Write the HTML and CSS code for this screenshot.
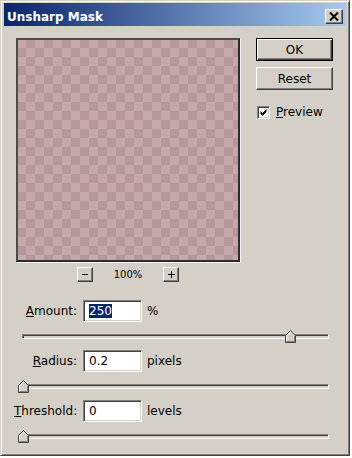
FILE: index.html
```html
<!DOCTYPE html>
<html>
<head>
<meta charset="utf-8">
<title>Unsharp Mask</title>
<link rel="stylesheet" href="styles.css">
</head>
<body>
<div class="window">
  <div class="titlebar">
    <span class="title">Unsharp Mask</span>
    <span class="close">
      <svg width="10" height="9" viewBox="0 0 10 9"><path d="M1 0.5 L9 8.5 M9 0.5 L1 8.5" stroke="#000" stroke-width="2" fill="none"/></svg>
    </span>
  </div>
  <div class="body">
    <div class="top">
      <div class="preview-col">
        <div class="preview"></div>
        <div class="zoom-row">
          <span class="small-btn"><svg width="6" height="2" viewBox="0 0 6 2"><rect x="0" y="0" width="6" height="1" fill="#000"/></svg></span>
          <span class="zoom-label">100%</span>
          <span class="small-btn"><svg width="7" height="7" viewBox="0 0 7 7"><rect x="0" y="3" width="7" height="1" fill="#000"/><rect x="3" y="0" width="1" height="7" fill="#000"/></svg></span>
        </div>
      </div>
      <div class="side">
        <div class="btn btn-default">OK</div>
        <div class="btn">Reset</div>
        <div class="check-row">
          <span class="checkbox"><svg width="7" height="7" viewBox="0 0 7 7"><path d="M0.5 2.5 L2.5 4.5 L6.5 0.5 M0.5 3.5 L2.5 5.5 L6.5 1.5 M0.5 4.5 L2.5 6.5 L6.5 2.5" stroke="#000" stroke-width="1" fill="none"/></svg></span>
          <span class="check-label"><u>P</u>review</span>
        </div>
      </div>
    </div>
    <div class="controls">
      <div class="field">
        <span class="label"><u>A</u>mount:</span>
        <span class="input"><span class="sel">250</span></span>
        <span class="unit">%</span>
      </div>
      <div class="slider">
        <svg class="thumb" style="left:262px" width="11" height="13" viewBox="0 0 11 13"><polygon points="0.5,12.5 0.5,5.5 5.5,0.5 10.5,5.5 10.5,12.5" fill="#d4d0c8" stroke="#404040"/><polyline points="1.5,11.5 1.5,6 5.5,2" fill="none" stroke="#fff"/><polyline points="9.5,6 9.5,11.5 1.5,11.5" fill="none" stroke="#808080"/></svg>
      </div>
      <div class="field">
        <span class="label"><u>R</u>adius:</span>
        <span class="input">0.2</span>
        <span class="unit">pixels</span>
      </div>
      <div class="slider">
        <svg class="thumb" style="left:-5px" width="11" height="13" viewBox="0 0 11 13"><polygon points="0.5,12.5 0.5,5.5 5.5,0.5 10.5,5.5 10.5,12.5" fill="#d4d0c8" stroke="#404040"/><polyline points="1.5,11.5 1.5,6 5.5,2" fill="none" stroke="#fff"/><polyline points="9.5,6 9.5,11.5 1.5,11.5" fill="none" stroke="#808080"/></svg>
      </div>
      <div class="field">
        <span class="label"><u>T</u>hreshold:</span>
        <span class="input">0</span>
        <span class="unit">levels</span>
      </div>
      <div class="slider">
        <svg class="thumb" style="left:-5px" width="11" height="13" viewBox="0 0 11 13"><polygon points="0.5,12.5 0.5,5.5 5.5,0.5 10.5,5.5 10.5,12.5" fill="#d4d0c8" stroke="#404040"/><polyline points="1.5,11.5 1.5,6 5.5,2" fill="none" stroke="#fff"/><polyline points="9.5,6 9.5,11.5 1.5,11.5" fill="none" stroke="#808080"/></svg>
      </div>
    </div>
  </div>
</div>
</body>
</html>
```
FILE: styles.css
```css
html, body {
  margin: 0;
  background: #ffffff;
}
body {
  font-family: "DejaVu Sans", Tahoma, sans-serif;
  font-size: 12px;
  color: #000;
}
.window {
  box-sizing: border-box;
  width: 350px;
  height: 456px;
  background: #d4d0c8;
  border: 1px solid;
  border-color: #d4d0c8 #404040 #404040 #d4d0c8;
  box-shadow: inset 1px 1px #ffffff, inset -1px -1px #808080;
  padding: 2px 3px 0 3px;
}
.titlebar {
  box-sizing: border-box;
  height: 23px;
  display: flex;
  align-items: center;
  justify-content: space-between;
  padding: 4px 3px 0 3px;
  background: linear-gradient(to right, #0a246a, #a6caf0);
  color: #fff;
  font-weight: bold;
  font-size: 12px;
}
.close {
  box-sizing: border-box;
  width: 18px;
  height: 15px;
  background: #d4d0c8;
  border: 1px solid;
  border-color: #ffffff #404040 #404040 #ffffff;
  box-shadow: inset -1px -1px #808080;
  display: flex;
  align-items: center;
  justify-content: center;
}
.body {
  padding: 12px 13px 0 12px;
}
.top {
  display: flex;
  gap: 16px;
}
.preview {
  box-sizing: border-box;
  width: 224px;
  height: 224px;
  border: 2px solid;
  border-color: #4c4c4c #2c2c2c #2c2c2c #4c4c4c;
  box-shadow: 1px 1px 0 #f2f2f2;
  background: repeating-conic-gradient(#b6989b 0 25%, #c5a8ab 0 50%) -1px -1px / 18px 18px;
}
.zoom-row {
  display: flex;
  justify-content: center;
  align-items: center;
  gap: 21px;
  margin-top: 5px;
  height: 15px;
}
.small-btn {
  box-sizing: border-box;
  width: 16px;
  height: 15px;
  border: 1px solid;
  border-color: #ffffff #404040 #404040 #ffffff;
  box-shadow: inset -1px -1px #808080;
  display: flex;
  align-items: center;
  justify-content: center;
}
.zoom-label {
  font-size: 10px;
}
.side {
  width: 77px;
  display: flex;
  flex-direction: column;
}
.btn {
  box-sizing: border-box;
  height: 23px;
  display: flex;
  align-items: center;
  justify-content: center;
  border: 1px solid;
  border-color: #ffffff #404040 #404040 #ffffff;
  box-shadow: inset -1px -1px #808080;
}
.btn-default {
  border-color: #000;
  box-shadow: inset 1px 1px #ffffff, inset -1px -1px #404040, inset -2px -2px #808080;
}
.btn + .btn {
  margin-top: 6px;
}
.check-row {
  display: flex;
  align-items: center;
  gap: 6px;
  margin-top: 15px;
  margin-left: 1px;
}
.checkbox {
  box-sizing: border-box;
  width: 13px;
  height: 13px;
  background: #fff;
  border: 1px solid;
  border-color: #808080 #ffffff #ffffff #808080;
  box-shadow: inset 1px 1px #404040, inset -1px -1px #d4d0c8;
  display: flex;
  align-items: center;
  justify-content: center;
}
.controls {
  margin-top: 18px;
  margin-left: -2px;
}
.field {
  display: flex;
  align-items: center;
  height: 22px;
}
.label {
  width: 63px;
  text-align: right;
  white-space: nowrap;
}
.input {
  box-sizing: border-box;
  width: 59px;
  height: 22px;
  margin-left: 6px;
  background: #fff;
  border: 1px solid;
  border-color: #808080 #ffffff #ffffff #808080;
  box-shadow: inset 1px 1px #404040, inset -1px -1px #d4d0c8;
  padding-left: 5px;
  display: flex;
  align-items: center;
}
.sel {
  background: #0a246a;
  color: #fff;
}
.unit {
  margin-left: 5px;
}
.slider {
  position: relative;
  box-sizing: border-box;
  height: 5px;
  width: 307px;
  margin: 12px 0 11px 8px;
  border: 1px solid;
  border-color: #808080 #ffffff #ffffff #808080;
  box-shadow: inset 1px 1px #404040;
  background: #d4d0c8;
}
.thumb {
  position: absolute;
  top: -5px;
}
```
